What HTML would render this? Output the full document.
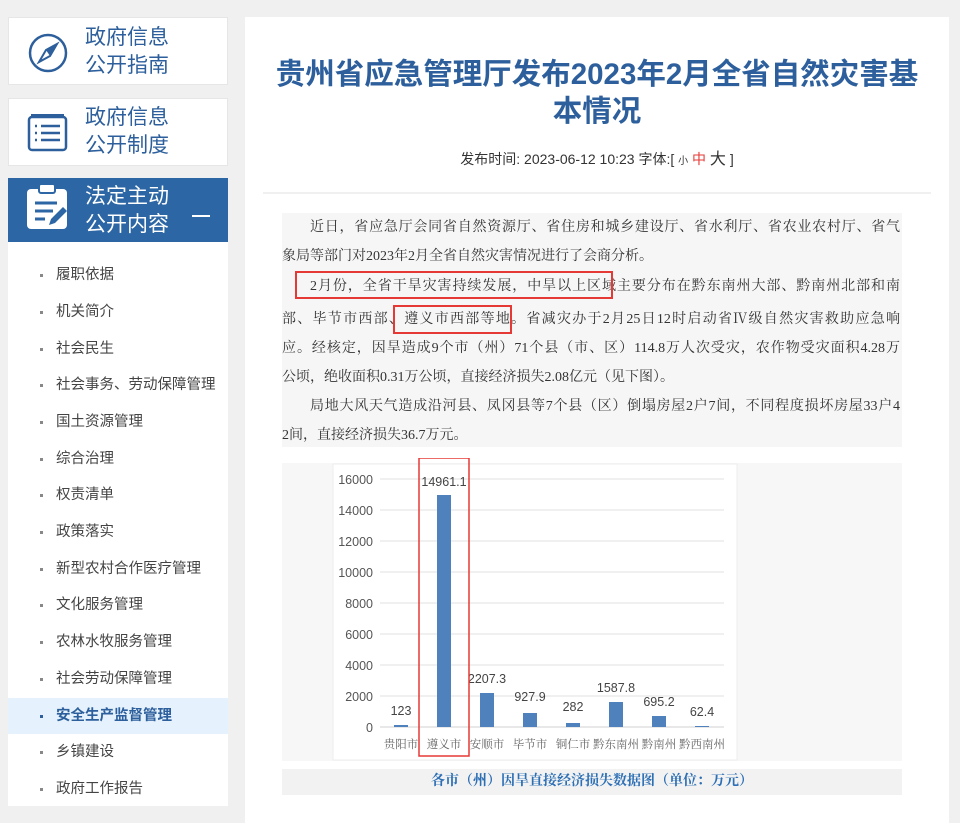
<!DOCTYPE html>
<html><head><meta charset="utf-8"><style>
*{margin:0;padding:0;box-sizing:border-box}
body{width:960px;height:823px;background:#f0f0f0;position:relative;overflow:hidden;font-family:"Liberation Sans","Noto Sans CJK SC",sans-serif}
.box{position:absolute;left:8px;width:220px;background:#fff;border:1px solid #e6e6e6}
.bt{position:absolute;left:76px;font-size:21px;line-height:28px;color:#2d5f9c}
.list{position:absolute;left:8px;top:242px;width:220px;height:564px;background:#fff}
.it{position:absolute;left:0;width:220px;height:36px;line-height:36px;font-size:14.5px;color:#444;padding-left:48px}
.it:before{content:"";position:absolute;left:32px;top:17px;width:3px;height:3px;background:#888}
.it.on{background:#e5f2fd;color:#2d5f9c;font-weight:bold}
.it.on:before{background:#2d5f9c}
.main{position:absolute;left:245px;top:17px;width:704px;height:806px;background:#fff}
h1{position:absolute;left:0;top:39px;width:704px;text-align:center;font-size:29.5px;line-height:37px;color:#2d5f9c;font-weight:bold;padding:0 24px}
.meta{position:absolute;left:0;top:128px;width:704px;text-align:center;font-size:14px;color:#333}
.sep{position:absolute;left:18px;top:175px;width:668px;height:2px;background:#f0f0f0}
.txtbg{position:absolute;left:37px;top:196px;width:620px;height:234px;background:#f6f6f6}
.ln{position:absolute;left:37px;width:618px;height:20px;line-height:20px;font-family:"Liberation Serif","Noto Serif CJK SC",serif;font-size:14px;color:#333;text-align:justify;text-align-last:justify;white-space:nowrap}
.ln.i{left:65px;width:590px}
.ln.l{text-align-last:left}
.red{position:absolute;border:2px solid #e53935}
.cap{position:absolute;left:37px;top:752px;width:620px;height:26px;background:#f2f2f2;text-align:center;line-height:26px;font-family:"Liberation Serif","Noto Serif CJK SC",serif;font-weight:bold;font-size:14px;color:#2d6fb5}
</style></head><body>
<div class="box" style="top:17px;height:68px">
<svg style="position:absolute;left:18px;top:14px" width="42" height="42" viewBox="0 0 42 42"><circle cx="21" cy="21" r="18" fill="none" stroke="#2d5f9c" stroke-width="2.5"/><path d="M30 12 L23 24 L12 30 L19 18 Z" fill="none" stroke="#2d5f9c" stroke-width="2"/><path d="M30 12 L19 18 L23 24Z" fill="#2d5f9c"/></svg>
<div class="bt" style="top:6px">政府信息<br>公开指南</div></div>
<div class="box" style="top:98px;height:68px">
<svg style="position:absolute;left:18px;top:14px" width="42" height="40" viewBox="0 0 42 40"><rect x="2" y="4" width="37" height="33" rx="3" fill="none" stroke="#2d5f9c" stroke-width="2.5"/><line x1="4" y1="2" x2="37" y2="2" stroke="#2d5f9c" stroke-width="2"/><g stroke="#2d5f9c" stroke-width="2.5"><line x1="8" y1="13" x2="10" y2="13"/><line x1="14" y1="13" x2="33" y2="13"/><line x1="8" y1="20" x2="10" y2="20"/><line x1="14" y1="20" x2="33" y2="20"/><line x1="8" y1="27" x2="10" y2="27"/><line x1="14" y1="27" x2="33" y2="27"/></g></svg>
<div class="bt" style="top:5px">政府信息<br>公开制度</div></div>
<div class="box" style="top:178px;height:64px;background:#2c66a4;border-color:#2c66a4">
<svg style="position:absolute;left:18px;top:4px" width="44" height="46" viewBox="0 0 44 46"><rect x="0" y="6" width="40" height="40" rx="4" fill="#fff"/><rect x="12" y="1" width="16" height="9" rx="2" fill="#fff" stroke="#2c66a4" stroke-width="2"/><g stroke="#2c66a4" stroke-width="3"><line x1="8" y1="20" x2="30" y2="20"/><line x1="8" y1="28" x2="26" y2="28"/><line x1="8" y1="36" x2="18" y2="36"/></g><path d="M22 42 L24 36 L36 24 L40 28 L28 40 Z" fill="#2c66a4"/></svg>
<div class="bt" style="top:4px;color:#fff">法定主动<br>公开内容</div>
<div style="position:absolute;left:183px;top:36px;width:18px;height:2px;background:#fff"></div></div>
<div class="list">
<div class="it" style="top:15px">履职依据</div>
<div class="it" style="top:52px">机关简介</div>
<div class="it" style="top:89px">社会民生</div>
<div class="it" style="top:125px">社会事务、劳动保障管理</div>
<div class="it" style="top:162px">国土资源管理</div>
<div class="it" style="top:199px">综合治理</div>
<div class="it" style="top:235px">权责清单</div>
<div class="it" style="top:272px">政策落实</div>
<div class="it" style="top:309px">新型农村合作医疗管理</div>
<div class="it" style="top:345px">文化服务管理</div>
<div class="it" style="top:382px">农林水牧服务管理</div>
<div class="it" style="top:419px">社会劳动保障管理</div>
<div class="it on" style="top:456px">安全生产监督管理</div>
<div class="it" style="top:492px">乡镇建设</div>
<div class="it" style="top:529px">政府工作报告</div>
</div>
<div class="main">
<h1>贵州省应急管理厅发布2023年2月全省自然灾害基本情况</h1>
<div class="meta">发布时间: 2023-06-12 10:23 字体:[ <span style="font-size:10px">小</span> <span style="color:#e53935">中</span> <span style="font-size:16px">大</span> ]</div>
<div class="sep"></div>
<div class="txtbg"></div>
<div class="ln i" style="top:201px">近日，省应急厅会同省自然资源厅、省住房和城乡建设厅、省水利厅、省农业农村厅、省气</div>
<div class="ln l" style="top:230px">象局等部门对2023年2月全省自然灾害情况进行了会商分析。</div>
<div class="ln i" style="top:260px">2月份，全省干旱灾害持续发展，中旱以上区域主要分布在黔东南州大部、黔南州北部和南</div>
<div class="ln" style="top:293px">部、毕节市西部、遵义市西部等地。省减灾办于2月25日12时启动省Ⅳ级自然灾害救助应急响</div>
<div class="ln" style="top:322px">应。经核定，因旱造成9个市（州）71个县（市、区）114.8万人次受灾，农作物受灾面积4.28万</div>
<div class="ln l" style="top:351px">公顷，绝收面积0.31万公顷，直接经济损失2.08亿元（见下图）。</div>
<div class="ln i" style="top:380px">局地大风天气造成沿河县、凤冈县等7个县（区）倒塌房屋2户7间，不同程度损坏房屋33户4</div>
<div class="ln l" style="top:409px">2间，直接经济损失36.7万元。</div>
<div class="red" style="left:50px;top:254px;width:318px;height:28px"></div>
<div class="red" style="left:148px;top:288px;width:119px;height:29px"></div>
<div style="position:absolute;left:37px;top:446px;width:620px;height:298px;background:#f7f7f7"></div>
<svg style="position:absolute;left:37px;top:441px" width="620" height="310" viewBox="282 458 620 310" font-family="Liberation Sans, Noto Sans CJK SC, sans-serif">
<rect x="333" y="464" width="404" height="296" fill="#fff" stroke="#eee"/>
<g stroke="#e2e2e2" stroke-width="1">
<line x1="380" y1="479" x2="724" y2="479"/><line x1="380" y1="510" x2="724" y2="510"/><line x1="380" y1="541" x2="724" y2="541"/><line x1="380" y1="572" x2="724" y2="572"/><line x1="380" y1="603" x2="724" y2="603"/><line x1="380" y1="634" x2="724" y2="634"/><line x1="380" y1="665" x2="724" y2="665"/><line x1="380" y1="696" x2="724" y2="696"/><line x1="380" y1="727" x2="724" y2="727" stroke="#d0d0d0"/></g>
<g font-size="12.5" fill="#555" text-anchor="end">
<text x="373" y="484">16000</text><text x="373" y="515">14000</text><text x="373" y="546">12000</text><text x="373" y="577">10000</text><text x="373" y="608">8000</text><text x="373" y="639">6000</text><text x="373" y="670">4000</text><text x="373" y="701">2000</text><text x="373" y="732">0</text></g>
<g fill="#4f81bd">
<rect x="394" y="725" width="14" height="2"/><rect x="437" y="495" width="14" height="232"/><rect x="480" y="693" width="14" height="34"/><rect x="523" y="713" width="14" height="14"/><rect x="566" y="723" width="14" height="4"/><rect x="609" y="702" width="14" height="25"/><rect x="652" y="716" width="14" height="11"/><rect x="695" y="726" width="14" height="1"/></g>
<g font-size="12.5" fill="#444" text-anchor="middle">
<text x="401" y="715">123</text><text x="444" y="486">14961.1</text><text x="487" y="683">2207.3</text><text x="530" y="701">927.9</text><text x="573" y="711">282</text><text x="616" y="692">1587.8</text><text x="659" y="706">695.2</text><text x="702" y="716">62.4</text></g>
<g font-size="11.5" fill="#666" text-anchor="middle" font-family="Liberation Serif, Noto Serif CJK SC, serif">
<text x="401" y="748">贵阳市</text><text x="444" y="748">遵义市</text><text x="487" y="748">安顺市</text><text x="530" y="748">毕节市</text><text x="573" y="748">铜仁市</text><text x="616" y="748">黔东南州</text><text x="659" y="748">黔南州</text><text x="702" y="748">黔西南州</text></g>
<rect x="419" y="458" width="50" height="298" fill="none" stroke="#e53935" stroke-width="1.5"/>
</svg>
<div class="cap">各市（州）因旱直接经济损失数据图（单位：万元）</div>
</div>
</body></html>
